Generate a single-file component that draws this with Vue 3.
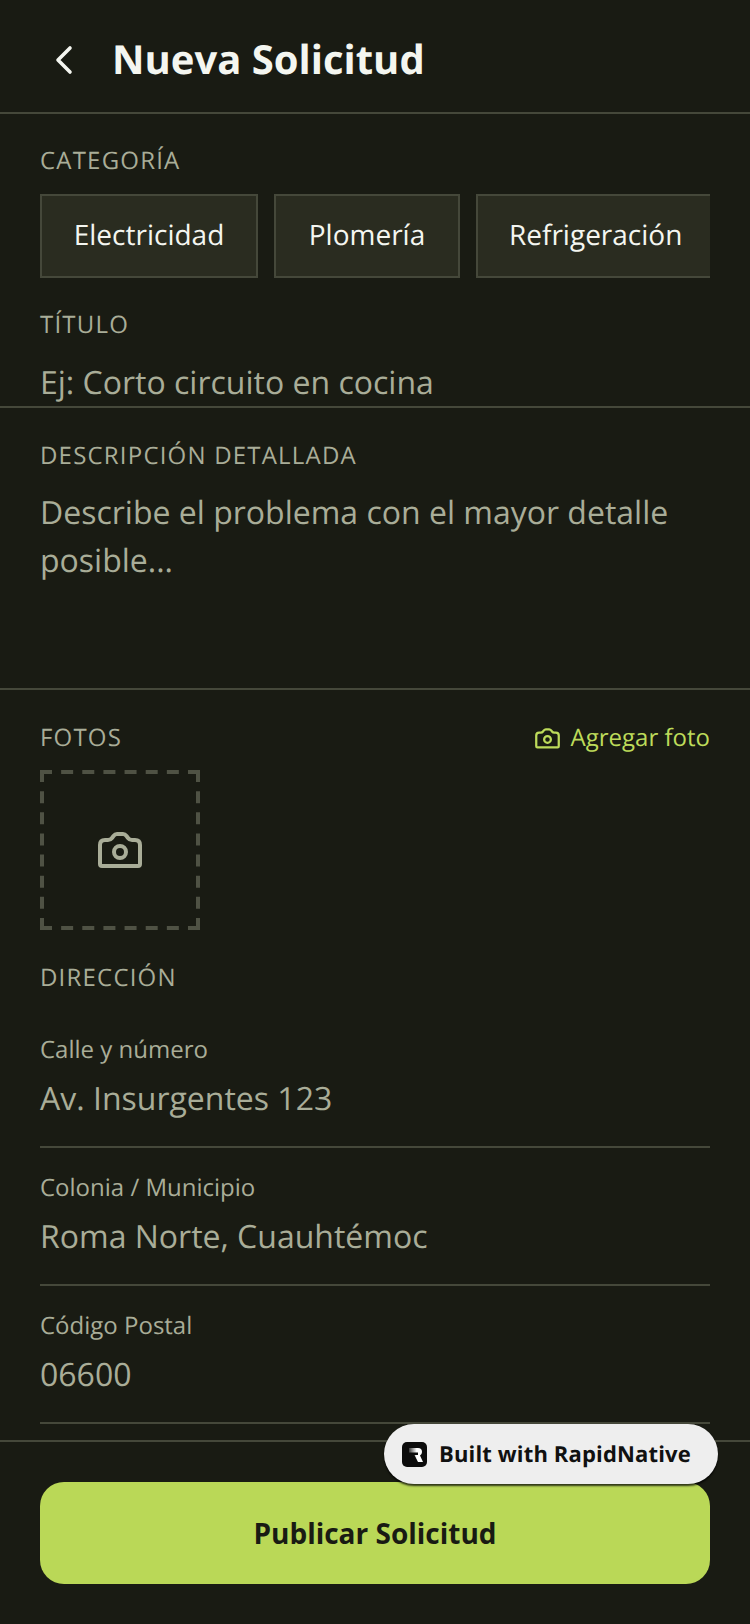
<template>
  <div class="screen">
    <header class="header">
      <svg class="back" width="48" height="48" viewBox="0 0 48 48" fill="none" stroke="#f4f6f0" stroke-width="3.6" stroke-linecap="round" stroke-linejoin="round">
        <path d="M30 13L18 25l12 12" />
      </svg>
      <h1 class="title">Nueva Solicitud</h1>
    </header>

    <main class="form">
      <section class="category">
        <div class="label">CATEGORÍA</div>
        <div class="chips">
          <div v-for="c in categories" :key="c" class="chip">{{ c }}</div>
        </div>
      </section>

      <section class="title-field">
        <div class="label">TÍTULO</div>
        <div class="placeholder single">Ej: Corto circuito en cocina</div>
      </section>

      <section class="desc-field">
        <div class="label">DESCRIPCIÓN DETALLADA</div>
        <div class="placeholder multi">Describe el problema con el mayor detalle posible...</div>
      </section>

      <section class="photos">
        <div class="photos-head">
          <div class="label">FOTOS</div>
          <div class="add">
            <svg width="27" height="22.5" viewBox="0 0 48 40" fill="none" stroke="#bddb5a" stroke-width="4" stroke-linejoin="round">
              <path :d="cameraPath" />
              <circle cx="24" cy="22" r="6" />
            </svg>
            <span>Agregar foto</span>
          </div>
        </div>
        <div class="drop">
          <svg class="dashes" width="160" height="160" viewBox="0 0 160 160" stroke="#4f5244" stroke-width="4" stroke-dasharray="12 9.14">
            <line x1="0" y1="2" x2="160" y2="2" />
            <line x1="0" y1="158" x2="160" y2="158" />
            <line x1="2" y1="0" x2="2" y2="160" />
            <line x1="158" y1="0" x2="158" y2="160" />
          </svg>
          <svg width="48" height="40" viewBox="0 0 48 40" fill="none" stroke="#a9ad98" stroke-width="4" stroke-linejoin="round">
            <path :d="cameraPath" />
            <circle cx="24" cy="22" r="6" />
          </svg>
        </div>
      </section>

      <section class="address">
        <div class="label">DIRECCIÓN</div>
        <div class="addr-list">
          <div v-for="f in addressFields" :key="f.label" class="addr-row">
            <div class="addr-label">{{ f.label }}</div>
            <div class="addr-value">{{ f.value }}</div>
          </div>
        </div>
      </section>
    </main>

    <footer class="footer">
      <button class="publish">Publicar Solicitud</button>
    </footer>

    <div class="badge">
      <svg width="25" height="25" viewBox="0 0 25 25">
        <defs>
          <linearGradient id="logoFade" x1="0" y1="0" x2="1" y2="0">
            <stop offset="0" stop-color="#3a3a3a" />
            <stop offset="0.55" stop-color="#ffffff" />
          </linearGradient>
        </defs>
        <rect width="25" height="25" rx="5" fill="#0c0c0c" />
        <path d="M7 6H16Q20 6 20 10Q20 12 18 13.500L21 20H16L12.500 13H16V10.500H7Z" fill="url(#logoFade)" />
      </svg>
      <span>Built with RapidNative</span>
    </div>
  </div>
</template>

<script setup>
const categories = ['Electricidad', 'Plomería', 'Refrigeración']

const addressFields = [
  { label: 'Calle y número', value: 'Av. Insurgentes 123' },
  { label: 'Colonia / Municipio', value: 'Roma Norte, Cuauhtémoc' },
  { label: 'Código Postal', value: '06600' },
]

const cameraPath =
  'M4 15Q4 10 9 10H12Q14.500 10 16 8L17.500 6Q19 4 21 4H27Q29 4 30.500 6L32 8Q33.500 10 36 10H39Q44 10 44 15V34Q44 36 42 36H6Q4 36 4 34Z'
</script>

<style>
body {
  background: #191b13;
}
</style>

<style scoped>
.screen {
  position: relative;
  width: 750px;
  height: 1624px;
  overflow: hidden;
  background: #191b13;
  font-family: "Open Sans", sans-serif;
  text-rendering: geometricPrecision;
  display: flex;
  flex-direction: column;
}

.header {
  height: 114px;
  box-sizing: border-box;
  flex: none;
  display: flex;
  align-items: center;
  padding: 6px 40px 0 40px;
  border-bottom: 2px solid #45483a;
}

.back {
  flex: none;
}

.title {
  margin: 0 0 0 24px;
  font-size: 40px;
  font-weight: 700;
  line-height: 52px;
  color: #f4f6f0;
}

.form {
  flex: 1;
  min-height: 0;
}

.label {
  font-size: 24px;
  line-height: 32px;
  letter-spacing: 1.2px;
  color: #a9ad98;
}

.category {
  padding: 31px 40px 0;
}

.chips {
  display: flex;
  gap: 16px;
  margin-top: 17px;
  overflow: hidden;
}

.chip {
  flex: none;
  height: 84px;
  box-sizing: border-box;
  padding: 0 32px 2px;
  display: flex;
  align-items: center;
  justify-content: center;
  background: #2a2c20;
  border: 2px solid #45483a;
  font-size: 28px;
  color: #f4f6f0;
}

.chip:nth-child(1) {
  width: 218px;
}

.chip:nth-child(2) {
  width: 186px;
}

.chip:nth-child(3) {
  padding-left: 31px;
}

.title-field {
  padding: 31px 40px 0;
  height: 130px;
  box-sizing: border-box;
  border-bottom: 2px solid #45483a;
}

.placeholder {
  font-size: 32px;
  color: #a9ad98;
}

.single {
  margin-top: 20px;
  line-height: 44px;
}

.desc-field {
  padding: 32px 40px 0;
  height: 282px;
  box-sizing: border-box;
  border-bottom: 2px solid #45483a;
}

.multi {
  margin-top: 17px;
  line-height: 48px;
}

.photos {
  padding: 32px 40px 0;
}

.photos-head {
  display: flex;
  justify-content: space-between;
  align-items: center;
}

.add {
  display: flex;
  align-items: center;
  gap: 10px;
  font-size: 24px;
  line-height: 32px;
  color: #bddb5a;
}

.drop {
  position: relative;
  width: 160px;
  height: 160px;
  margin-top: 16px;
  display: flex;
  align-items: center;
  justify-content: center;
}

.dashes {
  position: absolute;
  inset: 0;
}

.address {
  padding: 32px 40px 0;
}

.addr-list {
  margin-top: 16px;
}

.addr-row {
  height: 138px;
  box-sizing: border-box;
  padding-top: 24px;
  border-bottom: 2px solid #45483a;
}

.addr-label {
  font-size: 24px;
  line-height: 32px;
  color: #a9ad98;
}

.addr-value {
  margin-top: 11px;
  font-size: 32px;
  line-height: 44px;
  color: #a9ad98;
}

.footer {
  flex: none;
  height: 184px;
  box-sizing: border-box;
  padding: 40px 40px 0;
  border-top: 2px solid #45483a;
}

.publish {
  display: block;
  width: 100%;
  height: 102px;
  border: none;
  border-radius: 24px;
  background: #bad857;
  color: #191b13;
  font-family: inherit;
  font-size: 28px;
  font-weight: 700;
}

.badge {
  position: absolute;
  left: 384px;
  top: 1424px;
  width: 334px;
  height: 60px;
  box-sizing: border-box;
  padding-left: 18px;
  display: flex;
  align-items: center;
  gap: 12px;
  background: #eeeeee;
  border-radius: 30px;
  box-shadow: 0 2px 2px rgba(0, 0, 0, 0.75);
  font-size: 22px;
  letter-spacing: 0.15px;
  font-weight: 700;
  color: #111;
}
</style>
